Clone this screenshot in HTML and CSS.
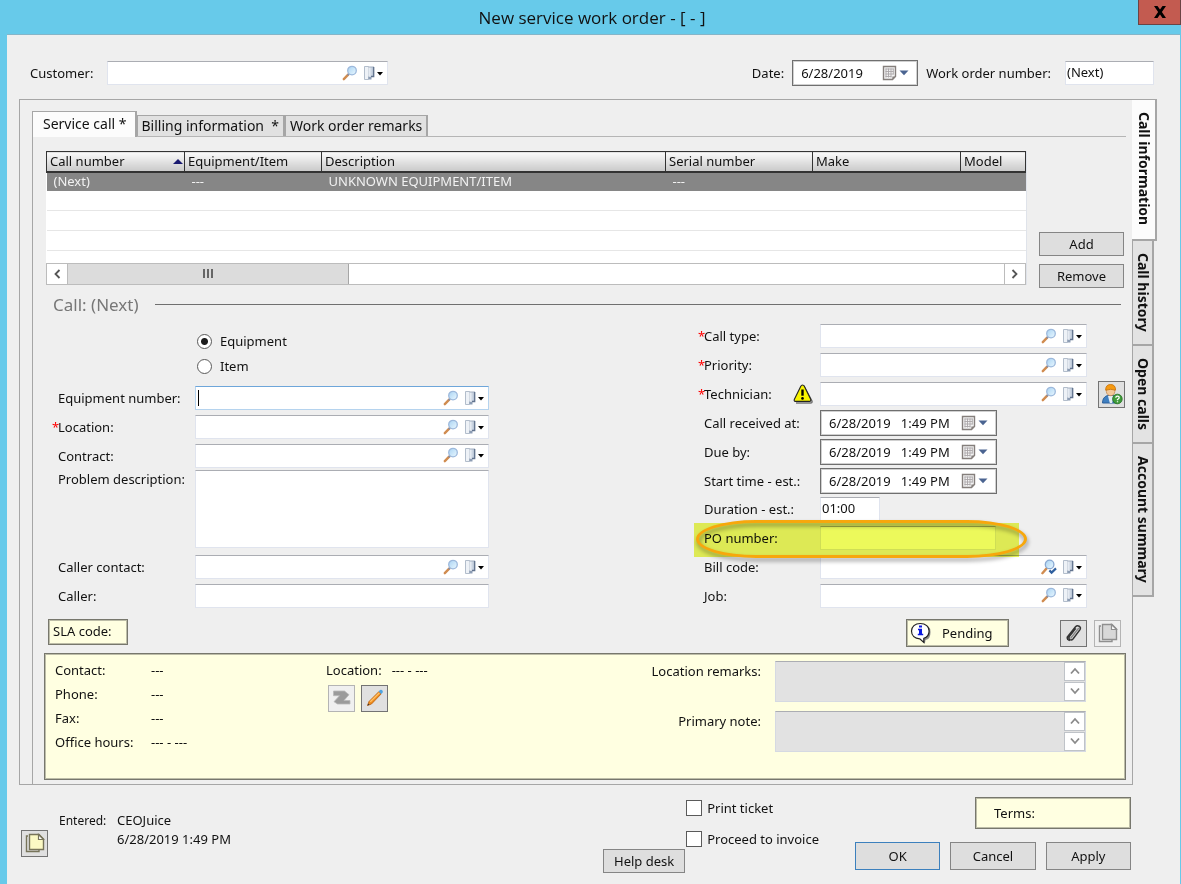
FILE: index.html
```html
<!DOCTYPE html>
<html lang="en">
<head>
<meta charset="utf-8">
<title>New service work order</title>
<link rel="stylesheet" href="styles.css">
</head>
<body>
<svg class="defs" aria-hidden="true">
  <defs>
    <linearGradient id="lens" x1="0" y1="0" x2="1" y2="1"><stop offset="0" stop-color="#a9d3f3"/><stop offset="1" stop-color="#eaf8ff"/></linearGradient>
    <linearGradient id="door" x1="0" y1="0" x2="1" y2="0"><stop offset="0" stop-color="#f4f7fb"/><stop offset="1" stop-color="#a9b8cc"/></linearGradient>
  </defs>
  <symbol id="search" viewBox="0 0 16 16">
    <path d="M1.8 14.2 6.4 9.4" stroke="#d08c50" stroke-width="2.4" stroke-linecap="round"/>
    <path d="M5.6 10.2 7 8.8" stroke="#7f8fb0" stroke-width="1.6"/>
    <circle cx="10" cy="5.6" r="4.3" fill="url(#lens)" stroke="#9db9dc" stroke-width="1.3"/>
  </symbol>
  <symbol id="search-check" viewBox="0 0 16 16">
    <path d="M1.4 14.2 5.4 9.6" stroke="#d08c50" stroke-width="2.4" stroke-linecap="round"/>
    <circle cx="8.6" cy="5.4" r="4.3" fill="url(#lens)" stroke="#8aa9d2" stroke-width="1.3"/>
    <path d="M8.4 11.4 10.6 13.6 15 9.4" fill="none" stroke="#2f5f9e" stroke-width="2.2"/>
  </symbol>
  <symbol id="open" viewBox="0 0 20 16">
    <path d="M1.500 1.500h4v13h-4z" fill="#eef2f7" stroke="#a9b5c5" stroke-width=".9"/>
    <path d="M5.500 11.500v3h3v-3z" fill="#8d9db4"/>
    <path d="M5.500 2h5.500v9.500H5.500z" fill="url(#door)"/>
    <path d="M5.500 2H11" stroke="#98a6ba" stroke-width=".9"/>
    <path d="M10.700 2v9.500H8" fill="none" stroke="#62738e" stroke-width="1.300"/>
    <path d="M14 7h6l-3 3.400z" fill="#000"/>
  </symbol>
  <symbol id="calendar" viewBox="0 0 28 16">
    <path d="M1.5 1.5h12v10l-3 3h-9z" fill="#f3f3f3" stroke="#857f7c" stroke-width="1.4"/>
    <path d="M3.5 4h8M3.5 6.5h8M3.5 9h8M3.5 11.5h6M4 3.5v9M6.5 3.5v9M9 3.5v9M11.3 3.5v6" stroke="#aaa6a8" stroke-width=".9"/>
    <path d="M10.4 14.4v-3h3z" fill="#857f7c"/>
    <path d="M17.5 5.5h9L22 10.2z" fill="#4b6491"/>
  </symbol>
  <symbol id="warning" viewBox="0 0 20 20">
    <path d="M10.6 1.6 19 17.2q.3 1.8-1.4 1.8H3" fill="none" stroke="#777" stroke-width="1.6"/>
    <path d="M9.5 1q1.2 0 1.8 1.2l6.4 13q.6 2-1.2 2.2H2.4Q.6 17 1.4 15.2L7.8 2.2Q8.400 1 9.500 1z" fill="#f8f400" stroke="#222" stroke-width="1.1"/>
    <path d="M9.500 5.500v6.200" stroke="#000" stroke-width="2.400"/><circle cx="9.500" cy="14.400" r="1.300"/>
  </symbol>
  <symbol id="clip" viewBox="0 0 20 20">
    <path d="M3 14.500 11.500 3.800q1.500-1.600 3.600-.6 2.100 1.300.9 3.400L9 16q-1.400 1.500-3.200.6-1.600-1.100-.5-3l6.500-8.200" fill="none" stroke="#333" stroke-width="1.500"/>
    <path d="M6.500 15.500 14.800 5" stroke="#888" stroke-width="1.400"/>
    <path d="M3.300 14.200q-.6 2.900 2.500 3.300" fill="none" stroke="#222" stroke-width="1.300"/>
  </symbol>
  <symbol id="pages" viewBox="0 0 22 22">
    <path d="M4 4H2.500v15.500H15V18" fill="none" stroke="currentColor" stroke-width="1.400"/>
    <path d="M5.500 2.500h9.500l4.500 4.500v10.500h-14z" fill="var(--paper)" stroke="currentColor" stroke-width="1.400"/>
    <path d="M14.500 2.500v5h5z" fill="#fff" stroke="currentColor" stroke-width="1.200"/>
  </symbol>
  <symbol id="swap" viewBox="0 0 20 20">
    <path d="M1.500 3h11l4.500 3.700-5 5.800h6V16H5.500L2 13.700l5.500-6h-6z" fill="#9b9b9b" stroke="#b9b9b9" stroke-width=".8"/>
  </symbol>
  <symbol id="pencil" viewBox="0 0 20 20">
    <path d="M2.500 17.500 4 13.500 13.800 3.700l2.300 2.300L6.500 16z" fill="#f08c1c" stroke="#b85e0c" stroke-width=".8"/>
    <path d="M5.300 13.800 14.500 4.700" stroke="#ffc36a" stroke-width="1.200"/>
    <path d="m13.700 3.500 1.300-1.400q1.200-.9 2.200.2t.5 2.200l-1.500 1.600z" fill="#4ea4e0"/>
    <path d="m2.500 17.500.7-2 1.300 1.300z" fill="#333"/>
  </symbol>
  <symbol id="up" viewBox="0 0 12 12"><path d="M2 8.500 6 4l4 4.500" fill="none" stroke="#8a8a8a" stroke-width="1.800"/></symbol>
  <symbol id="down" viewBox="0 0 12 12"><path d="M2 3.500 6 8l4-4.500" fill="none" stroke="#8a8a8a" stroke-width="1.800"/></symbol>
  <symbol id="left" viewBox="0 0 12 12"><path d="M8.500 2 4.500 6l4 4" fill="none" stroke="#555" stroke-width="1.800"/></symbol>
  <symbol id="right" viewBox="0 0 12 12"><path d="M3.500 2 7.500 6l-4 4" fill="none" stroke="#555" stroke-width="1.800"/></symbol>
</svg>

<header class="titlebar">
  <h1 class="title">New service work order - [ - ]</h1>
  <button class="close" aria-label="Close"><svg width="14" height="14" viewBox="0 0 14 14"><path d="M1 1h3.500L7 4.600 9.500 1H13L8.900 7l4.100 6H9.500L7 9.400 4.500 13H1l4.100-6z"/></svg></button>
</header>

<main class="dialog">
  <div class="topbar">
    <label class="customer-label" for="customer">Customer:</label>
    <div class="lookup customer"><input id="customer"><button class="glyph" aria-label="Find customer"><svg width="16" height="16"><use href="#search"/></svg></button><button class="glyph" aria-label="Open customer"><svg width="20" height="16"><use href="#open"/></svg></button></div>
    <div class="topbar-right">
      <label for="date">Date:</label>
      <div class="datebox short"><input id="date" value="6/28/2019"><button class="glyph" aria-label="Pick date"><svg width="28" height="16"><use href="#calendar"/></svg></button></div>
      <label for="order">Work order number:</label>
      <input class="plain order" id="order" value="(Next)">
    </div>
  </div>

  <div class="workspace">
    <section class="panel">
      <div class="inner">
        <div class="tabs" role="tablist">
          <button class="tab active" role="tab">Service call *</button>
          <button class="tab" role="tab">Billing information &nbsp;*</button>
          <button class="tab" role="tab">Work order remarks</button>
        </div>
        <div class="page">
          <div class="calls">
            <div class="list">
              <table class="grid">
                <colgroup><col class="c-call"><col class="c-equip"><col><col class="c-serial"><col class="c-make"><col class="c-model"></colgroup>
                <thead><tr><th><span class="sorted">Call number<i class="sort"></i></span></th><th>Equipment/Item</th><th>Description</th><th>Serial number</th><th>Make</th><th>Model</th></tr></thead>
                <tbody>
                  <tr class="selected"><td>(Next)</td><td>---</td><td>UNKNOWN EQUIPMENT/ITEM</td><td>---</td><td></td><td></td></tr>
                  <tr><td colspan="6"></td></tr>
                  <tr><td colspan="6"></td></tr>
                  <tr><td colspan="6"></td></tr>
                </tbody>
              </table>
              <div class="scrollbar">
                <button class="scroll-end" aria-label="Scroll left"><svg width="12" height="12"><use href="#left"/></svg></button>
                <div class="track"><div class="thumb"><i></i><i></i><i></i></div></div>
                <button class="scroll-end" aria-label="Scroll right"><svg width="12" height="12"><use href="#right"/></svg></button>
              </div>
            </div>
            <div class="call-actions">
              <button class="btn small">Add</button>
              <button class="btn small">Remove</button>
            </div>
          </div>

          <h2 class="section">Call: (Next)</h2>

          <div class="form">
            <div class="col left">
              <div class="radios">
                <label><input type="radio" name="kind" checked>Equipment</label>
                <label><input type="radio" name="kind">Item</label>
              </div>
              <label for="equip">Equipment number:</label>
              <div class="lookup focused"><span class="caret"></span><input id="equip"><button class="glyph" aria-label="Find equipment"><svg width="16" height="16"><use href="#search"/></svg></button><button class="glyph" aria-label="Open equipment"><svg width="20" height="16"><use href="#open"/></svg></button></div>
              <label class="required" for="location">Location:</label>
              <div class="lookup"><input id="location"><button class="glyph" aria-label="Find location"><svg width="16" height="16"><use href="#search"/></svg></button><button class="glyph" aria-label="Open location"><svg width="20" height="16"><use href="#open"/></svg></button></div>
              <label for="contract">Contract:</label>
              <div class="lookup"><input id="contract"><button class="glyph" aria-label="Find contract"><svg width="16" height="16"><use href="#search"/></svg></button><button class="glyph" aria-label="Open contract"><svg width="20" height="16"><use href="#open"/></svg></button></div>
              <label class="top" for="problem">Problem description:</label>
              <textarea class="problem" id="problem"></textarea>
              <label for="contact">Caller contact:</label>
              <div class="lookup"><input id="contact"><button class="glyph" aria-label="Find contact"><svg width="16" height="16"><use href="#search"/></svg></button><button class="glyph" aria-label="Open contact"><svg width="20" height="16"><use href="#open"/></svg></button></div>
              <label for="caller">Caller:</label>
              <input class="plain" id="caller">
            </div>

            <div class="col right">
              <label class="required" for="type">Call type:</label>
              <div class="lookup"><input id="type"><button class="glyph" aria-label="Find call type"><svg width="16" height="16"><use href="#search"/></svg></button><button class="glyph" aria-label="Open call type"><svg width="20" height="16"><use href="#open"/></svg></button></div>
              <label class="required" for="priority">Priority:</label>
              <div class="lookup"><input id="priority"><button class="glyph" aria-label="Find priority"><svg width="16" height="16"><use href="#search"/></svg></button><button class="glyph" aria-label="Open priority"><svg width="20" height="16"><use href="#open"/></svg></button></div>
              <div class="with-icon"><label class="required" for="tech">Technician:</label><svg width="20" height="20"><use href="#warning"/></svg></div>
              <div class="lookup"><input id="tech"><button class="glyph" aria-label="Find technician"><svg width="16" height="16"><use href="#search"/></svg></button><button class="glyph" aria-label="Open technician"><svg width="20" height="16"><use href="#open"/></svg></button></div>
              <button class="iconbtn" aria-label="Suggest technician">
                <svg width="22" height="22" viewBox="0 0 22 22">
                  <path d="M1.500 20q0-6 5-7.500h6q4 1.500 4 7.500z" fill="#3f7fc0" stroke="#2a5f9a"/>
                  <path d="M7 13h5.500l-1.300 7h-2.400z" fill="#e6edf5"/>
                  <circle cx="9.600" cy="8.500" r="4.200" fill="#f3c99a" stroke="#c58a55" stroke-width=".8"/>
                  <path d="M4.600 7.200q0-5.700 5-5.700t5 5.700q-5-1.800-10 0z" fill="#f59a12" stroke="#c86f00" stroke-width=".8"/>
                  <circle cx="16.400" cy="16" r="4.800" fill="#3f9b3a" stroke="#247020" stroke-width=".8"/>
                  <path d="M14.800 14.800q0-1.700 1.700-1.700t1.700 1.500q0 1.100-1.700 1.900v.7M16.500 18.200v1.100" fill="none" stroke="#fff" stroke-width="1.300"/>
                </svg>
              </button>
              <label for="received">Call received at:</label>
              <div class="datebox"><input id="received" value="6/28/2019&nbsp;&nbsp; 1:49 PM"><button class="glyph" aria-label="Pick date"><svg width="28" height="16"><use href="#calendar"/></svg></button></div>
              <label for="due">Due by:</label>
              <div class="datebox"><input id="due" value="6/28/2019&nbsp;&nbsp; 1:49 PM"><button class="glyph" aria-label="Pick date"><svg width="28" height="16"><use href="#calendar"/></svg></button></div>
              <label for="start">Start time - est.:</label>
              <div class="datebox"><input id="start" value="6/28/2019&nbsp;&nbsp; 1:49 PM"><button class="glyph" aria-label="Pick date"><svg width="28" height="16"><use href="#calendar"/></svg></button></div>
              <label for="duration">Duration - est.:</label>
              <input class="plain duration" id="duration" value="01:00">
              <div class="marked">
                <label for="po">PO number:</label>
                <input class="plain" id="po">
                <span class="marker"></span><span class="ring"></span>
              </div>
              <label for="bill">Bill code:</label>
              <div class="lookup"><input id="bill"><button class="glyph" aria-label="Find bill code"><svg width="16" height="16"><use href="#search-check"/></svg></button><button class="glyph" aria-label="Open bill code"><svg width="20" height="16"><use href="#open"/></svg></button></div>
              <label for="job">Job:</label>
              <div class="lookup"><input id="job"><button class="glyph" aria-label="Find job"><svg width="16" height="16"><use href="#search"/></svg></button><button class="glyph" aria-label="Open job"><svg width="20" height="16"><use href="#open"/></svg></button></div>
            </div>
          </div>

          <div class="status">
            <div class="note sla">SLA code:</div>
            <div class="note pending">
              <svg width="22" height="22" viewBox="0 0 22 22">
                <path d="M11.500 2q9 .4 9 8t-5 8l-.6 3.500L10 17.500" fill="#888"/>
                <path d="M10.300 1.500c5.400 0 8.800 3.200 8.800 7.600 0 4-2.500 6.500-5.300 7.300v4L9.800 16.800C4.800 16.600 1.500 13.500 1.500 9.100S5 1.500 10.300 1.500z" fill="#fff" stroke="#222" stroke-width="1.200"/>
                <path d="M9 3.500h3v2H9zM8 6.800h4v5h1.200v1.500H7.800v-1.500H9V8.300H8z" fill="#0a18e0"/>
              </svg>Pending</div>
            <div class="tools">
              <button class="iconbtn" aria-label="Attachments"><svg width="20" height="20"><use href="#clip"/></svg></button>
              <button class="iconbtn off" disabled aria-label="Notes"><svg width="22" height="22"><use href="#pages"/></svg></button>
            </div>
          </div>

          <div class="info">
            <dl class="facts">
              <dt>Contact:</dt><dd>---</dd>
              <dt>Phone:</dt><dd>---</dd>
              <dt>Fax:</dt><dd>---</dd>
              <dt>Office hours:</dt><dd>--- - ---</dd>
            </dl>
            <div class="place">
              <div class="place-line"><span>Location:</span><span>--- - ---</span></div>
              <div class="place-tools">
                <button class="iconbtn off" disabled aria-label="Change location"><svg width="20" height="20"><use href="#swap"/></svg></button>
                <button class="iconbtn" aria-label="Edit location"><svg width="20" height="20"><use href="#pencil"/></svg></button>
              </div>
            </div>
            <div class="remarks">
              <label for="locrem">Location remarks:</label>
              <div class="memo"><textarea id="locrem" readonly></textarea><div class="spin"><button aria-label="Up"><svg width="12" height="12"><use href="#up"/></svg></button><button aria-label="Down"><svg width="12" height="12"><use href="#down"/></svg></button></div></div>
              <label for="primary">Primary note:</label>
              <div class="memo"><textarea id="primary" readonly></textarea><div class="spin"><button aria-label="Up"><svg width="12" height="12"><use href="#up"/></svg></button><button aria-label="Down"><svg width="12" height="12"><use href="#down"/></svg></button></div></div>
            </div>
          </div>
        </div>
      </div>
    </section>
    <nav class="sidetabs" role="tablist">
      <button class="sidetab current" role="tab">Call information</button>
      <button class="sidetab" role="tab">Call history</button>
      <button class="sidetab" role="tab">Open calls</button>
      <button class="sidetab" role="tab">Account summary</button>
    </nav>
  </div>

  <footer class="footer">
    <button class="iconbtn sheet" aria-label="Notes"><svg width="22" height="22"><use href="#pages"/></svg></button>
    <div class="entered"><span class="entered-label">Entered:</span><span>CEOJuice<br>6/28/2019 1:49 PM</span></div>
    <button class="btn small help">Help desk</button>
    <div class="checks">
      <label><input type="checkbox">Print ticket</label>
      <label><input type="checkbox">Proceed to invoice</label>
    </div>
    <div class="finish">
      <div class="note terms">Terms:</div>
      <div class="finish-row">
        <button class="btn primary">OK</button>
        <button class="btn">Cancel</button>
        <button class="btn">Apply</button>
      </div>
    </div>
  </footer>
</main>
</body>
</html>
```
FILE: styles.css
```css
:root {
  --line: #a6a6a6;
  --dark: #6f6f6f;
  --face: #efefef;
  --paper: #f2f2f2;
}
* { box-sizing: border-box; }
body {
  margin: 0;
  min-height: 100vh;
  display: flex;
  flex-direction: column;
  background: #67caea;
  color: #111;
  font: 13px/18px "Noto Sans", Tahoma, sans-serif;
}
button, input, textarea { font: inherit; color: inherit; }
button { padding: 0; border: 0; background: none; }
input, textarea { min-width: 0; border: 0; outline: 0; background: none; padding: 0; }
.defs { position: absolute; width: 0; height: 0; }

.titlebar { display: grid; grid-template-columns: 46px 1fr 43px; height: 34px; align-items: start; }
.title { grid-column: 2; margin: 0; text-align: center; font: 400 17px/36px "Open Sans", "Segoe UI", sans-serif; }
.close { height: 25px; display: grid; place-items: center; background: #c35b50; border: 1px solid #6b4444; border-top: 0; }

.dialog { flex: 1; margin: 0 1px 0 7px; padding: 25px 22px 11px 12px; background: var(--face); border-top: 1px solid #85b5c8; }

.topbar { display: flex; align-items: center; justify-content: space-between; padding-left: 11px; height: 26px; margin-bottom: 13px; }
.customer-label { width: 77px; }
.customer { flex: 0 1 281px; }
.topbar-right { display: flex; align-items: center; gap: 8px; margin-left: auto; padding-right: 4px; }
.order { width: 89px; margin-left: 6px; }

.lookup, .plain, .problem { background: #fff; border: 1px solid #e0e4ee; border-top-color: #abadb3; }
.lookup { display: flex; align-items: center; height: 24px; padding: 0 4px 1px 2px; }
.lookup input { flex: 1; }
.lookup .glyph + .glyph { margin-left: 5px; }
.lookup.focused { border-color: #b5d3ee; border-top-color: #6ea6da; }
.caret { width: 1px; height: 16px; background: #000; }
.plain { height: 24px; padding: 0 1px 2px; }
.glyph { display: flex; flex: none; }
.datebox { display: flex; align-items: center; width: 177px; height: 26px; padding: 0 7px 0 8px; background: #fff; border: 1px solid var(--dark); outline: 1px solid #d0d0d0; outline-offset: -2px; }
.datebox input { flex: 1; }
.datebox.short { width: 126px; }

.workspace { display: flex; align-items: stretch; }
.panel { flex: 1; min-width: 0; border: 1px solid var(--line); padding: 11px 6px 0 12px; }
.inner { border-left: 1px solid var(--line); }
.tabs { display: flex; align-items: flex-end; border-bottom: 1px solid #b5b5b5; font-size: 14px; }
.tab { height: 21px; padding: 0 4px; background: #e1e1e1; border: 1px solid var(--line); border-width: 1px 2px 0 1px; line-height: 20px; }
.tab.active { height: 26px; margin: 0 0 -1px -1px; padding: 0 8px 1px 10px; background: #fcfcfc; }
.page { padding: 14px 0 4px 11px; }

.calls { display: flex; align-items: flex-end; gap: 12px; padding: 0 2px; }
.list { flex: 1; min-width: 0; background: #fff; border-right: 1px solid #dfe3ea; margin-bottom: 3px; }
.call-actions { display: flex; flex-direction: column; gap: 8px; width: 85px; }
.grid { width: 100%; border-collapse: collapse; table-layout: fixed; }
.c-call { width: 138px; } .c-equip { width: 137px; } .c-serial { width: 147px; } .c-make { width: 148px; } .c-model { width: 65px; }
.grid th { height: 20px; padding: 0 0 0 3px; line-height: 17px; text-align: left; font-weight: 400; white-space: nowrap; background: linear-gradient(#fafafa, #c9c9c9); border: 1px solid #333; border-width: 1px 1px 2px; }
.grid td { height: 20px; padding: 0 7px; border-bottom: 1px solid #e6e6e6; white-space: nowrap; }
.grid .selected td { height: 18px; line-height: 17px; background: #868686; color: #f2f2f2; border-color: #868686; }
.sorted { display: flex; justify-content: space-between; align-items: center; padding-right: 1px; }
.sort { border: 5px solid transparent; border-top: 0; border-bottom: 5px solid #1a1a70; }
.scrollbar { display: flex; height: 22px; margin-top: 12px; border: 1px solid #bcbcbc; }
.scroll-end { width: 20px; display: grid; place-items: center; }
.track { flex: 1; border: 1px solid #bcbcbc; border-width: 0 1px; }
.thumb { width: 30%; height: 20px; display: flex; justify-content: center; align-items: center; gap: 2px; background: #dcdcdc; border-right: 1px solid var(--line); }
.thumb i { width: 2px; height: 9px; background: #666; }

.btn { height: 28px; background: #dedede; border: 1px solid #858585; font-size: 13px; }
.btn.small { height: 24px; }
.btn.primary { border-color: #3c80bd; }
.iconbtn { display: grid; place-items: center; width: 27px; height: 27px; background: #e0e0e0; border: 1px solid #737373; color: #77745a; }
.iconbtn.off { background: #f0f0f0; border-color: #b4b4b4; color: #8f8f8f; --paper: #d8d8d8; }

.section { display: flex; align-items: center; gap: 16px; margin: 5px 5px 5px 9px; font-size: 17px; line-height: 24px; font-weight: 400; color: #777; }
.section::after { content: ""; flex: 1; height: 1px; background: var(--dark); }

.form { display: flex; justify-content: space-between; gap: 24px; padding: 0 1px 0 8px; }
.col { display: grid; align-items: center; }
.col.left { flex: 0 1 437px; align-self: start; margin-top: 7px; grid-template-columns: 143px 1fr; grid-template-rows: 55px 29px 29px 28px 83px 29px 29px; }
.col.right { flex: 0 1 427px; grid-template-columns: 122px 1fr 38px; grid-template-rows: repeat(5, 29px) 28px repeat(3, 29px) 28px; }
.col label { padding-left: 6px; white-space: nowrap; }
.col label.required { padding-left: 0; }
.required::before { content: "*"; display: inline-block; width: 6px; color: #f00; }
.col.right > label, .with-icon, .marked { grid-column: 1; }
.radios { grid-column: 2; align-self: start; display: grid; grid-auto-rows: 25px; align-items: center; }
.radios label { display: flex; align-items: center; gap: 8px; padding-left: 2px; }
input[type="radio"], input[type="checkbox"] { appearance: none; flex: none; width: 15px; height: 15px; margin: 0; background: #fff; border: 1px solid #5a5a5a; }
input[type="radio"] { border-radius: 50%; }
input[type="radio"]:checked { background: radial-gradient(circle, #1c1c1c 0 3px, #fff 4px); }
.col .top { align-self: start; }
.problem { align-self: start; height: 78px; resize: none; }
.with-icon { display: flex; align-items: center; justify-content: space-between; padding-right: 7px; }
.col .iconbtn { justify-self: end; }
.duration { width: 60px; }
.col.right > .marked { grid-column: 1 / -1; position: relative; display: grid; grid-template-columns: 122px 176px; align-items: center; }
.marker { position: absolute; left: -4px; top: -3px; width: 325px; height: 34px; background: #ecf95b; mix-blend-mode: multiply; pointer-events: none; }
.ring { position: absolute; left: -2px; top: -6px; width: 331px; height: 38px; border: 3px solid #f7a70c; border-radius: 60px / 50%; filter: drop-shadow(1px 3px 2px #0006); pointer-events: none; }

.status { display: flex; align-items: flex-start; margin-top: 8px; padding: 0 5px 0 4px; height: 34px; }
.note { background: #ffffe1; border: 1px solid #77776d; outline: 1px solid #bdbda8; outline-offset: -2px; }
.sla { width: 80px; height: 26px; padding: 2px 4px; }
.pending { display: flex; align-items: center; gap: 10px; width: 103px; height: 28px; margin-left: auto; padding-left: 3px; }
.tools { display: flex; gap: 7px; margin: 1px 0 0 51px; }

.info { display: flex; min-height: 127px; padding: 7px 39px 7px 10px; background: #ffffe1; border: 1px solid #77776d; outline: 1px solid #bdbda8; outline-offset: -2px; }
.facts { display: grid; grid-template-columns: 96px 1fr; grid-auto-rows: 24px; align-items: center; align-content: start; margin: -3px 0 0; width: 271px; }
.facts dd { margin: 0; }
.place-line { display: flex; gap: 10px; }
.place-tools { display: flex; gap: 6px; margin: 6px 0 0 2px; }
.remarks { flex: 1; display: grid; grid-template-columns: 1fr 311px; grid-auto-rows: 41px; gap: 9px 14px; text-align: right; }
.remarks label { padding-top: 1px; }
.memo { display: flex; background: #e2e2e2; border: 1px solid #d5d9e2; border-top-color: #abadb3; }
.memo textarea { flex: 1; resize: none; }
.spin { display: grid; width: 21px; gap: 1px; }
.spin button { display: grid; place-items: center; background: #fff; border: 1px solid #bfc3c8; }

.sidetabs { display: flex; flex-direction: column; align-items: flex-start; width: 26px; margin-left: -1px; }
.sidetab { writing-mode: vertical-rl; width: 22px; padding: 12px 0; text-align: left; background: #e3e3e3; border: 1px solid var(--line); border-width: 0 2px 2px 1px; font-size: 14px; font-weight: 700; }
.sidetab.current { width: 25px; padding: 12px 0 14px; background: #fcfcfc; border-width: 1px 2px 2px 0; }

.footer { display: flex; align-items: flex-end; padding: 12px 27px 0 2px; }
.sheet { --paper: #fbf9c4; margin: 0 11px 16px 0; }
.entered { display: flex; align-self: flex-start; padding-top: 14px; line-height: 19px; }
.entered-label { width: 58px; font-size: 12px; }
.help { width: 82px; margin: 0 1px 0 auto; }
.checks { display: grid; grid-auto-rows: 31px; align-self: flex-start; align-items: center; }
.checks label { display: flex; align-items: center; gap: 5px; margin-top: -8px; }
.checks input { width: 16px; height: 16px; }
.finish { width: 276px; margin-left: 36px; padding-bottom: 3px; }
.terms { width: 156px; height: 32px; margin: 0 0 13px auto; padding: 6px 18px; }
.finish-row { display: grid; grid-template-columns: repeat(3, 1fr); gap: 10px; }
```
